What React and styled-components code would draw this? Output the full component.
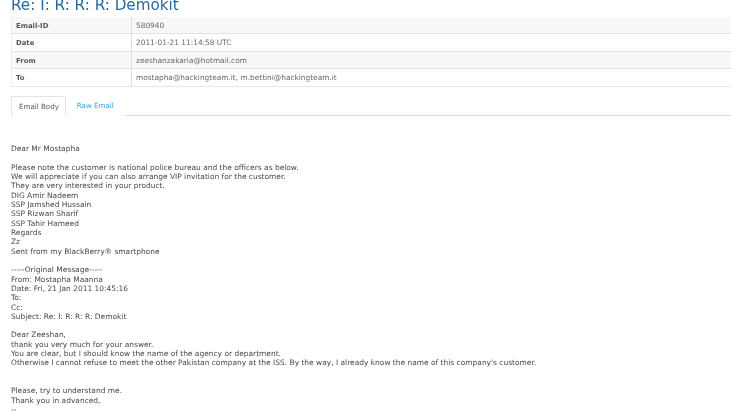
import styled, { createGlobalStyle } from 'styled-components';

const GlobalStyle = createGlobalStyle`
  html, body {
    margin: 0;
    padding: 0;
    height: 100%;
    overflow: hidden;
    background: #fff;
  }
`;

const Page = styled.div`
  width: 731px;
  height: 414px;
  overflow: hidden;
  padding-left: 11px;
  box-sizing: border-box;
  font-family: "DejaVu Sans", Verdana, sans-serif;
  color: #444;
  filter: blur(0.3px);
`;

const Title = styled.h1`
  margin: -5px 0 0;
  height: 21px;
  font-size: 15.2px;
  line-height: 21px;
  font-weight: 400;
  color: #2a6a9e;
  white-space: nowrap;
`;

const InfoTable = styled.div`
  margin-top: 1px;
  border-bottom: 1px solid #e8e8e8;
  border-left: 1px solid #eee;
`;

const InfoRow = styled.div`
  display: grid;
  grid-template-columns: 120px 1fr;
  height: 17.3px;
  background: ${(p) => (p.$shaded ? '#f8f8f8' : '#fff')};
  border-bottom: ${(p) => (p.$last ? 'none' : '1px solid #e2e2e2')};
  box-sizing: border-box;
`;

const InfoLabel = styled.div`
  padding-left: 4px;
  font-size: 6.9px;
  font-weight: 700;
  line-height: 18px;
  color: #555;
  border-right: 1px solid #ddd;
`;

const InfoValue = styled.div`
  padding-left: 4px;
  font-size: 7.4px;
  line-height: 17px;
  color: #666;
`;

const Tabs = styled.div`
  display: flex;
  margin-top: 9px;
  height: 20px;
  box-sizing: border-box;
  border-bottom: 1px solid #ddd;
`;

const Tab = styled.div`
  box-sizing: border-box;
  height: 20px;
  padding: ${(p) => (p.$active ? '0 6px 0 7px' : '0 11px')};
  font-size: 7.1px;
  line-height: 19px;
  color: ${(p) => (p.$active ? '#555' : '#2a9fd6')};
  background: #fff;
  ${(p) => p.$active && 'border: 1px solid #e4e4e4; border-bottom-color: #fff;'}
`;

const Body = styled.pre`
  margin: 28px 0 0;
  font-family: inherit;
  font-size: 7.48px;
  line-height: 9.31px;
  color: #4a4a4a;
  white-space: pre;
`;

const emailText = `Dear Mr Mostapha

Please note the customer is national police bureau and the officers as below.
We will appreciate if you can also arrange VIP invitation for the customer.
They are very interested in your product.
DIG Amir Nadeem
SSP Jamshed Hussain
SSP Rizwan Sharif
SSP Tahir Hameed
Regards
Zz
Sent from my BlackBerry® smartphone

-----Original Message-----
From: Mostapha Maanna
Date: Fri, 21 Jan 2011 10:45:16
To:
Cc:
Subject: Re: I: R: R: R: Demokit

Dear Zeeshan,
thank you very much for your answer.
You are clear, but I should know the name of the agency or department.
Otherwise I cannot refuse to meet the other Pakistan company at the ISS. By the way, I already know the name of this company's customer.


Please, try to understand me.
Thank you in advanced,
--`;

const rows = [
  ['Email-ID', '580940'],
  ['Date', '2011-01-21 11:14:58 UTC'],
  ['From', 'zeeshanzakaria@hotmail.com'],
  ['To', 'mostapha@hackingteam.it, m.bettini@hackingteam.it'],
];

export default function App() {
  return (
    <Page>
      <GlobalStyle />
      <Title>Re: I: R: R: R: Demokit</Title>
      <InfoTable>
        {rows.map(([label, value], i) => (
          <InfoRow key={label} $shaded={i % 2 === 0} $last={i === rows.length - 1}>
            <InfoLabel>{label}</InfoLabel>
            <InfoValue>{value}</InfoValue>
          </InfoRow>
        ))}
      </InfoTable>
      <Tabs>
        <Tab $active>Email Body</Tab>
        <Tab>Raw Email</Tab>
      </Tabs>
      <Body>{emailText}</Body>
    </Page>
  );
}
